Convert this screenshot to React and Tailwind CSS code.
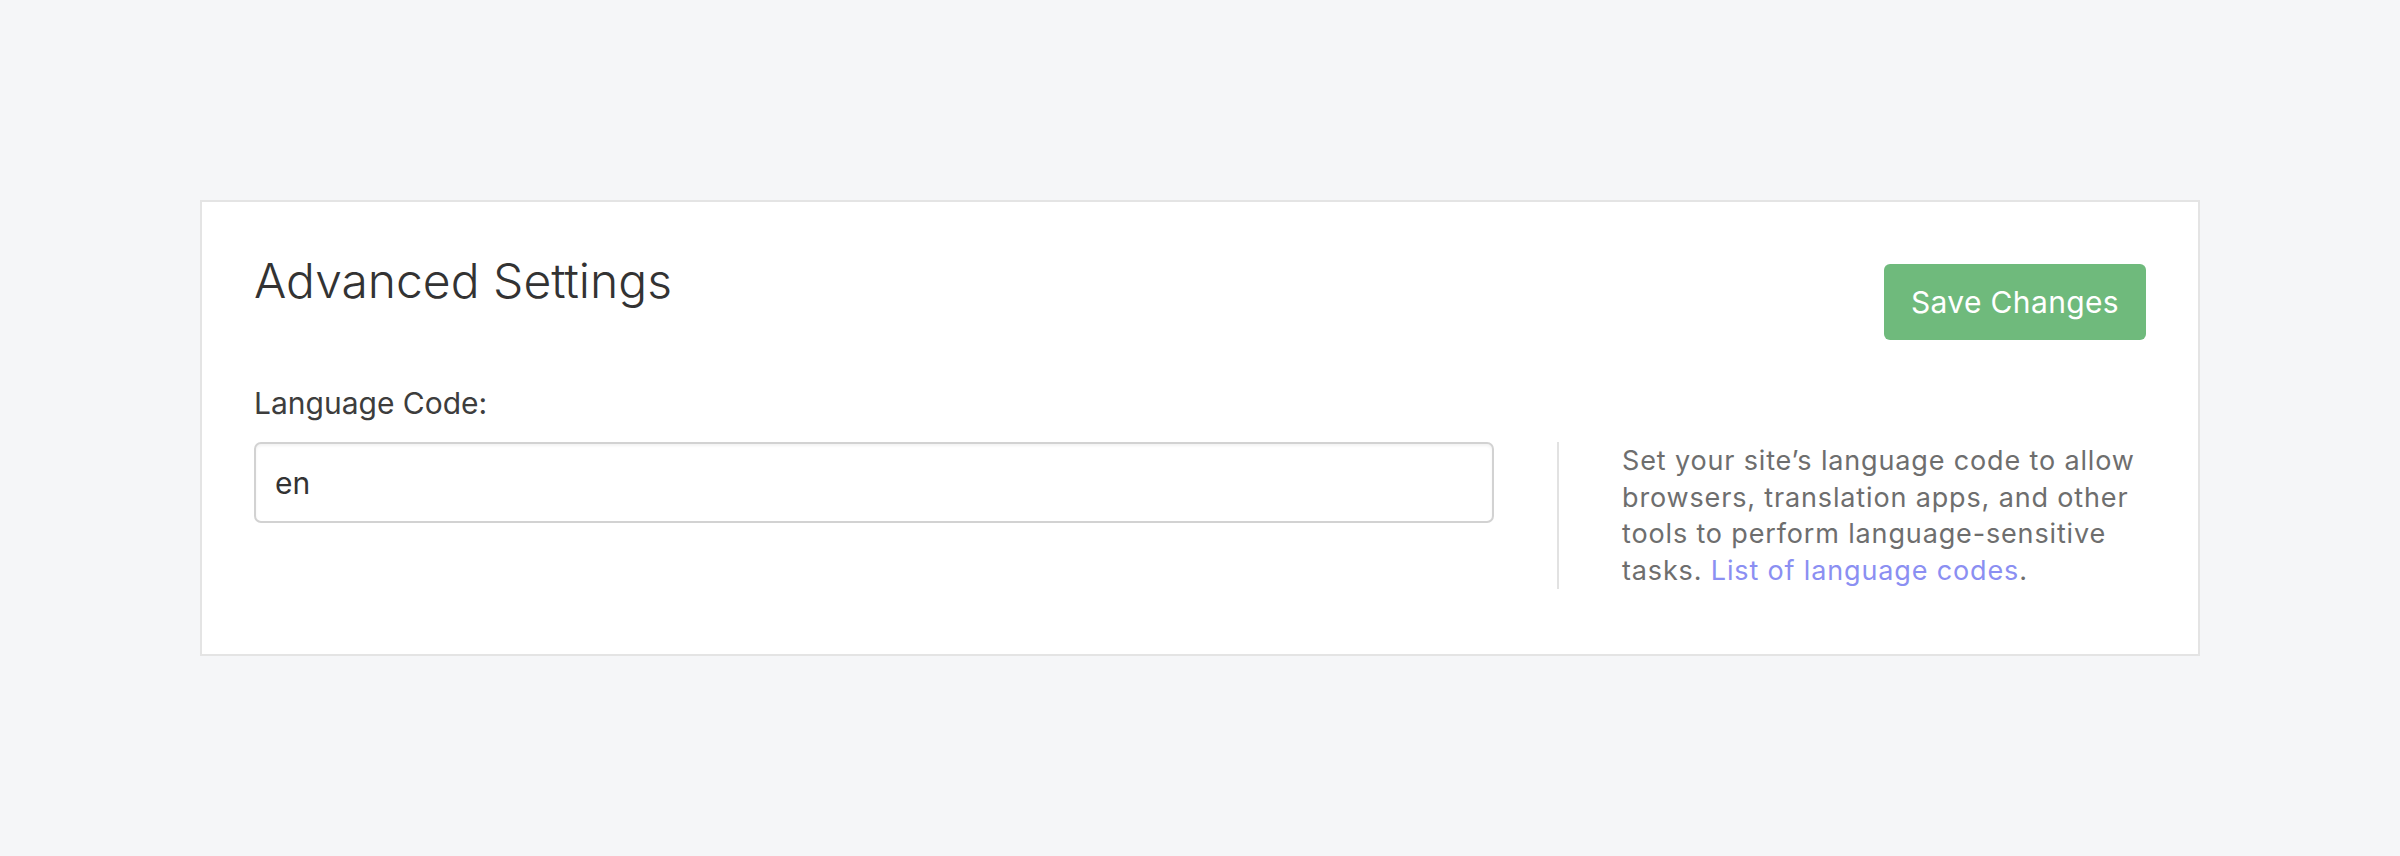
export default function App() {
  return (
    <main
      className="min-h-[856px] w-full bg-[#f5f6f8] pt-[200px]"
      style={{ fontFamily: "Inter, 'Noto Sans', sans-serif" }}
    >
      {/* settings card */}
      <section className="mx-auto w-[2000px] border-2 border-[#e4e4e4] bg-white px-[52px] pt-[50px] pb-[65px]">
        <div className="flex items-start justify-between">
          <h1 className="text-[48px] leading-[58px] font-light text-[#333333]">
            Advanced Settings
          </h1>
          <button className="mt-[12px] h-[76px] rounded-[6px] bg-[#6fba7c] px-[27px] text-[30px] leading-none tracking-[0.35px] text-white">
            Save Changes
          </button>
        </div>

        <label className="mt-[45px] block text-[30px] leading-[36px] text-[#3d3d3d]">
          Language Code:
        </label>

        <div className="mt-[21px] flex items-start">
          <div className="flex-1">
            <input
              type="text"
              defaultValue="en"
              className="h-[81px] w-full rounded-[7px] border-2 border-[#d2d2d2] bg-white px-[19px] text-[30px] text-[#333333] shadow-[inset_0_2px_3px_rgba(0,0,0,0.05)] outline-none"
            />
          </div>
          <p className="ml-[63px] w-[589px] border-l-2 border-[#e2e2e2] pt-[1px] pl-[63px] text-[27px] leading-[36.6px] tracking-[0.85px] text-[#6e6e6e]">
            Set your site’s language code to allow browsers, translation apps,
            and other tools to perform language-sensitive tasks.{" "}
            <a href="#" className="text-[#8b8ff2]">
              List of language codes
            </a>
            .
          </p>
        </div>
      </section>
    </main>
  );
}
